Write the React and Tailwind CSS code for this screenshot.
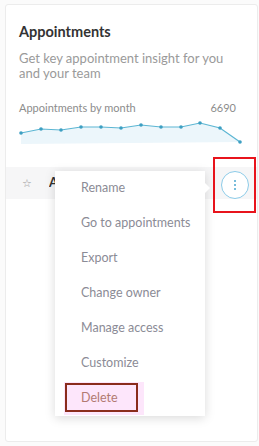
import React from "react";

const pts = [
  [20, 136], [40, 132], [60, 133], [80, 130], [100, 130], [120, 131],
  [140, 128], [160, 130], [180, 130], [199, 126], [219, 131], [239, 145],
];

function Chart() {
  const line = pts.map((p) => p.join(",")).join(" ");
  return (
    <svg width="259" height="30" viewBox="0 120 259 30" className="block">
      <polygon points={`20,147 ${line}`} fill="#ecf6fb" />
      <polyline points={line} fill="none" stroke="#5cb6d3" strokeWidth="1.2" />
      {pts.map((p, i) => (
        <circle key={i} cx={p[0]} cy={p[1]} r="1.8" fill="#3d9fc2" />
      ))}
    </svg>
  );
}

const items = [
  "Rename",
  "Go to appointments",
  "Export",
  "Change owner",
  "Manage access",
  "Customize",
];

export default function App() {
  return (
    <div
      className="relative w-[259px] h-[446px] bg-[#fbfbfb] overflow-hidden"
      style={{ fontFamily: "Lato, 'Open Sans', sans-serif" }}
    >
      <div className="absolute left-[5px] top-[4px] w-[253px] h-[438px] bg-white border border-[#ececec] rounded-[3px]">
        <div className="px-[13px] pt-[17px]">
          <h2 className="text-[14.5px] font-bold text-[#333] leading-[20px]">Appointments</h2>
          <p className="mt-[9px] text-[13px] leading-[15px] text-[#9a9a9a] w-[226px]">
            Get key appointment insight for you and your team
          </p>
          <div className="mt-[20px] flex justify-between text-[11px] text-[#8c8c8c] leading-[14px] pr-[8px]">
            <span>Appointments by month</span>
            <span>6690</span>
          </div>
        </div>
        <div className="-ml-[5px] mt-[2px]">
          <Chart />
        </div>
        <div className="mt-[20px] h-[32px] bg-[#f6f6f7] flex items-center pl-[16px]">
          <span className="text-[#999] text-[11px]">☆</span>
          <span className="ml-[17px] w-[9px] overflow-hidden whitespace-nowrap text-[13px] font-bold text-[#333]">A</span>
        </div>
      </div>

      {/* dots button */}
      <div className="absolute left-[221px] top-[171px] w-[28px] h-[28px] rounded-full border border-[#8ccbe8] bg-white flex flex-col items-center justify-center gap-[2px]">
        <span className="w-[2px] h-[2px] rounded-full bg-[#4aa6cf]" />
        <span className="w-[2px] h-[2px] rounded-full bg-[#4aa6cf]" />
        <span className="w-[2px] h-[2px] rounded-full bg-[#4aa6cf]" />
      </div>
      <div className="absolute left-[213px] top-[157px] w-[43px] h-[56px] border-2 border-[#e8141c]" />

      {/* menu */}
      <div className="absolute left-[55px] top-[171px] w-[150px] bg-white shadow-[0_2px_10px_rgba(0,0,0,0.15)]">
        <div className="absolute right-[-5px] top-[12px] w-0 h-0 border-y-[5px] border-y-transparent border-l-[5px] border-l-white" />
        {items.map((t) => (
          <div key={t} className="h-[35px] flex items-center pl-[26px] text-[12.5px] text-[#8b8b96]">
            {t}
          </div>
        ))}
        <div className="h-[35px] flex items-center pl-[9px]">
          <div className="relative h-[33px] w-[80px] bg-[#fde6fb] flex items-center">
            <div className="absolute left-[1px] top-[1px] w-[73px] h-[29px] border-2 border-[#8a2c1c]" />
            <span className="pl-[17px] text-[12.5px] text-[#b27a72]">Delete</span>
          </div>
        </div>
      </div>
    </div>
  );
}
